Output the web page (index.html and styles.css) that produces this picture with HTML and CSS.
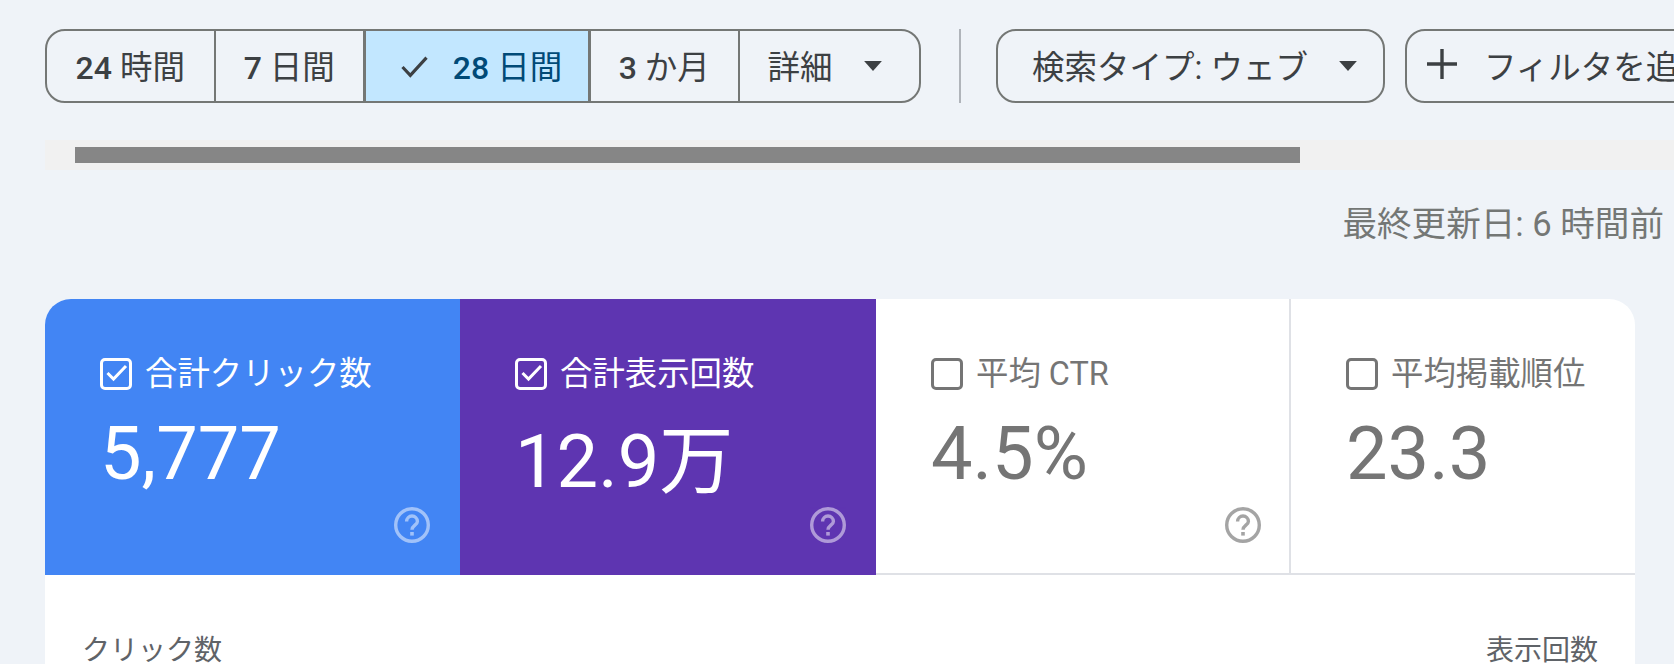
FILE: index.html
```html
<!DOCTYPE html>
<html lang="ja">
<head>
<meta charset="utf-8">
<title>検索パフォーマンス</title>
<link rel="stylesheet" href="styles.css">
</head>
<body>
<main class="page">
  <div class="toolbar">
    <div class="segmented">
      <button class="seg seg-first"><span><b class="num">24</b> 時間</span></button>
      <button class="seg seg-second"><span><b class="num">7</b> 日間</span></button>
      <button class="seg seg-selected">
        <svg class="check" viewBox="0 0 26 22"><path d="M1.5 11.5 9 19.5 24.5 2.5"/></svg>
        <span><b class="num">28</b> 日間</span>
      </button>
      <button class="seg seg-fourth"><span><b class="num">3</b> か月</span></button>
      <button class="seg seg-last">詳細<svg class="caret" viewBox="0 0 16 9"><path d="M0 0h16L8 9z"/></svg></button>
    </div>
    <span class="vrule"></span>
    <button class="chip chip-type">検索タイプ: ウェブ<svg class="caret" viewBox="0 0 16 9"><path d="M0 0h16L8 9z"/></svg></button>
    <button class="chip chip-add">
      <svg class="plus" viewBox="0 0 30 30"><path d="M15 0v30M0 15h30"/></svg>
      <span>フィルタを追加</span>
    </button>
  </div>

  <div class="hscroll"><div class="hscroll-thumb"></div></div>

  <p class="updated">最終更新日: 6 時間前</p>

  <section class="card">
    <div class="tiles">
      <article class="tile tile-blue">
        <div class="tile-label">
          <svg class="box" viewBox="0 0 32 32"><rect x="1.5" y="1.5" width="29" height="29" rx="3.5"/><path class="tick" d="M7.5 15l6 6L26 8"/></svg>
          <span>合計クリック数</span>
        </div>
        <div class="tile-value">5,777</div>
        <svg class="help" viewBox="0 0 36 36"><circle cx="18" cy="18" r="16.3"/><path d="M12.6 14.4a5.4 5.4 0 0 1 10.8 0c0 3.6-5.4 4-5.4 8.4"/><rect x="16.2" y="25" width="3.6" height="3.6"/></svg>
      </article>
      <article class="tile tile-purple">
        <div class="tile-label">
          <svg class="box" viewBox="0 0 32 32"><rect x="1.5" y="1.5" width="29" height="29" rx="3.5"/><path class="tick" d="M7.5 15l6 6L26 8"/></svg>
          <span>合計表示回数</span>
        </div>
        <div class="tile-value tile-value-cjk">12.9万</div>
        <svg class="help" viewBox="0 0 36 36"><circle cx="18" cy="18" r="16.3"/><path d="M12.6 14.4a5.4 5.4 0 0 1 10.8 0c0 3.6-5.4 4-5.4 8.4"/><rect x="16.2" y="25" width="3.6" height="3.6"/></svg>
      </article>
      <article class="tile tile-plain tile-ctr">
        <div class="tile-label">
          <svg class="box" viewBox="0 0 32 32"><rect x="1.5" y="1.5" width="29" height="29" rx="3.5"/></svg>
          <span>平均 CTR</span>
        </div>
        <div class="tile-value">4.5%</div>
        <svg class="help" viewBox="0 0 36 36"><circle cx="18" cy="18" r="16.3"/><path d="M12.6 14.4a5.4 5.4 0 0 1 10.8 0c0 3.6-5.4 4-5.4 8.4"/><rect x="16.2" y="25" width="3.6" height="3.6"/></svg>
      </article>
      <article class="tile tile-plain">
        <div class="tile-label">
          <svg class="box" viewBox="0 0 32 32"><rect x="1.5" y="1.5" width="29" height="29" rx="3.5"/></svg>
          <span>平均掲載順位</span>
        </div>
        <div class="tile-value">23.3</div>
      </article>
    </div>
    <div class="axis-titles">
      <span>クリック数</span>
      <span>表示回数</span>
    </div>
  </section>
</main>
</body>
</html>
```

FILE: styles.css
```css
* { box-sizing: border-box; }

html, body {
  margin: 0;
  height: 664px;
  overflow: hidden;
  background: #eff3f8;
}

body, button {
  font-family: Roboto, "Noto Sans CJK JP", sans-serif;
}

.page {
  width: 1674px;
  height: 664px;
  overflow: hidden;
  padding: 29px 0 0 45px;
}

.toolbar {
  display: flex;
  align-items: stretch;
  height: 74px;
  width: 1900px;
}

.segmented {
  display: flex;
  width: 876px;
  border: 2px solid #747775;
  border-radius: 20px;
  overflow: hidden;
}

.seg, .chip {
  display: flex;
  align-items: center;
  justify-content: center;
  height: 100%;
  margin: 0;
  padding: 0 0 4px;
  border: 0;
  background: transparent;
  color: #3c4043;
  font-size: 32.5px;
  font-weight: 400;
  white-space: pre;
}

.num {
  font-weight: 500;
  font-size: 32px;
}

.seg { border-right: 2px solid #747775; }
.seg-first { width: 168.5px; }
.seg-second { width: 150.5px; border-right-width: 3px; }
.seg-selected {
  width: 225px;
  gap: 24px;
  padding-left: 8px;
  background: #c2e7ff;
  color: #004a77;
  border-right-width: 3px;
}
.seg-fourth { width: 148.5px; }
.seg-last {
  flex: 1;
  border-right: 0;
  gap: 31px;
  justify-content: flex-start;
  padding-left: 28px;
}

.check {
  flex: none;
  width: 29px;
  height: 23px;
  margin-top: 4px;
  fill: none;
  stroke: #3c4043;
  stroke-width: 3;
}

.caret {
  flex: none;
  width: 18px;
  height: 10px;
  margin-top: 4px;
  fill: #3c4043;
}

.vrule {
  width: 2px;
  margin: 0 35px 0 38px;
  background: #b0b4ba;
}

.chip {
  border: 2px solid #747775;
  border-radius: 20px;
}

.chip-type {
  width: 389px;
  gap: 31px;
  justify-content: flex-start;
  padding-left: 34px;
  margin-right: 20px;
}

.chip-add {
  width: 400px;
  gap: 27px;
  justify-content: flex-start;
  padding-left: 20px;
}

.plus {
  flex: none;
  width: 30px;
  height: 30px;
  fill: none;
  stroke: #3c4043;
  stroke-width: 3.4;
}

.hscroll {
  margin-top: 37px;
  height: 30px;
  padding: 7px 0 0 30px;
  background: #f1f1f1;
}

.hscroll-thumb {
  width: 1225px;
  height: 16px;
  background: #868686;
}

.updated {
  margin: 34px 10px 0 0;
  height: 40px;
  text-align: right;
  font-size: 34.6px;
  line-height: 40px;
  white-space: nowrap;
  color: #747775;
}

.card {
  margin: 55px 39px 0 0;
  height: 365px;
  border-radius: 26px 26px 0 0;
  background: #fff;
  overflow: hidden;
}

.tiles {
  display: grid;
  grid-template-columns: 415px 416px 415px 1fr;
  height: 276px;
}

.tile {
  position: relative;
  height: 276px;
  padding: 59px 0 0 55px;
}

.tile-blue { background: #4285f4; color: #fff; }
.tile-purple { background: #5e35b1; color: #fff; }
.tile-plain {
  color: #757575;
  border-bottom: 2px solid #dfe1e6;
}
.tile-ctr { border-right: 2px solid #dfe1e6; }

.tile-label {
  display: flex;
  align-items: center;
  gap: 13px;
  height: 32px;
  font-size: 32.4px;
  line-height: 32px;
  white-space: nowrap;
}

.box {
  flex: none;
  width: 32px;
  height: 32px;
  fill: none;
  stroke: currentColor;
  stroke-width: 3;
}

.tile-value {
  margin-top: 20px;
  font-size: 74px;
  line-height: 88px;
  white-space: nowrap;
}

.tile-value-cjk { padding-top: 8px; }

.help {
  position: absolute;
  right: 30px;
  bottom: 32px;
  width: 36px;
  height: 36px;
  fill: none;
  stroke: currentColor;
  stroke-width: 3.4;
  opacity: .5;
}
.help rect { fill: currentColor; stroke: none; }
.tile-plain .help { right: 28px; bottom: 30px; opacity: .65; }

.axis-titles {
  display: flex;
  justify-content: space-between;
  padding: 62px 37px 0 37px;
  font-size: 28px;
  line-height: 27px;
  white-space: nowrap;
  color: #5f6368;
}
```
